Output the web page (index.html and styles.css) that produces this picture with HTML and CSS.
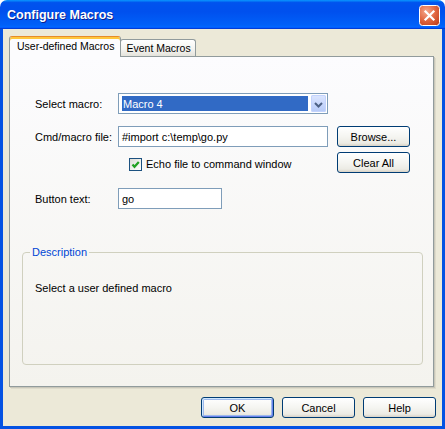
FILE: index.html
```html
<!DOCTYPE html>
<html>
<head>
<meta charset="utf-8">
<title>Configure Macros</title>
<link rel="stylesheet" href="styles.css">
</head>
<body>
<div class="window">
  <div class="titlebar">
    <span class="title">Configure Macros</span>
    <span class="close">
      <svg width="21" height="21" viewBox="0 0 21 21">
        <defs>
          <radialGradient id="cg" cx="35%" cy="30%" r="85%">
            <stop offset="0" stop-color="#F5A78C"/>
            <stop offset="0.55" stop-color="#E0653F"/>
            <stop offset="1" stop-color="#C2401D"/>
          </radialGradient>
        </defs>
        <rect x="0.5" y="0.5" width="20" height="20" rx="3" fill="url(#cg)" stroke="#fff"/>
        <path d="M6.5 6.5L14.5 14.5M14.5 6.5L6.5 14.5" stroke="#fff" stroke-width="2.2" stroke-linecap="square"/>
      </svg>
    </span>
  </div>
  <div class="frame">
    <div class="tabs">
      <div class="tab active">User-defined Macros</div>
      <div class="tab">Event Macros</div>
    </div>
    <div class="panel">
      <div class="row">
        <span class="label">Select macro:</span>
        <div class="combo">
          <span class="combo-value">Macro 4</span>
          <span class="combo-btn">
            <svg width="15" height="19" viewBox="0 0 15 19">
              <path d="M4 8L7.5 11.5L11 8" fill="none" stroke="#4D6185" stroke-width="2"/>
            </svg>
          </span>
        </div>
      </div>
      <div class="row r2">
        <span class="label">Cmd/macro file:</span>
        <div class="field">#import c:\temp\go.py</div>
        <div class="btn">Browse...</div>
      </div>
      <div class="row r3">
        <span class="label"></span>
        <div class="check-wrap">
          <span class="checkbox">
            <svg width="11" height="11" viewBox="0 0 11 11">
              <path d="M2.5 5.5L4.5 7.8L8.8 3" fill="none" stroke="#21A121" stroke-width="2.2"/>
            </svg>
          </span>
          <span class="check-label">Echo file to command window</span>
        </div>
        <div class="btn">Clear All</div>
      </div>
      <div class="row r4">
        <span class="label">Button text:</span>
        <div class="field short">go</div>
      </div>
      <fieldset class="group">
        <legend>Description</legend>
        <p class="desc">Select a user defined macro</p>
      </fieldset>
    </div>
    <div class="actions">
      <div class="btn default">OK</div>
      <div class="btn">Cancel</div>
      <div class="btn">Help</div>
    </div>
  </div>
</div>
</body>
</html>
```

FILE: styles.css
```css
html, body {
  margin: 0;
  padding: 0;
  background: #ffffff;
}
body {
  font-family: "Liberation Sans", Arial, sans-serif;
  font-size: 11px;
  color: #000;
}
.window {
  width: 445px;
  height: 429px;
  display: flex;
  flex-direction: column;
}
.titlebar {
  height: 29px;
  flex: none;
  box-sizing: border-box;
  display: flex;
  align-items: center;
  justify-content: space-between;
  padding: 0 5px 0 7px;
  border-radius: 7px 7px 0 0;
  background: linear-gradient(180deg, #0997ff 0%, #0053ee 9%, #0050ee 40%, #0060f8 86%, #0066ff 92%, #005bff 95%, #003dd7 97%, #003dd7 100%);
}
.title {
  color: #fff;
  font-weight: bold;
  font-size: 12.5px;
  text-shadow: 1px 1px 0 #0a1f8f;
  padding-top: 1px;
}
.close {
  display: flex;
  margin-top: 2px;
}
.frame {
  flex: 1;
  display: flex;
  flex-direction: column;
  background: #ECE9D8;
  border: 3px solid #0452E3;
  border-top: 0;
  padding: 7px 7px 0 6px;
}
.tabs {
  display: flex;
  align-items: flex-end;
  height: 20px;
  font-size: 10.5px;
}
.tab {
  box-sizing: border-box;
  height: 17px;
  padding: 0 4px 0 5px;
  display: flex;
  align-items: center;
  border: 1px solid #919B9C;
  border-bottom: 0;
  border-radius: 3px 3px 0 0;
  background: linear-gradient(180deg, #ffffff 0%, #F3F3EF 60%, #E4E3DB 100%);
  margin-left: -1px;
}
.tab.active {
  position: relative;
  z-index: 2;
  height: 21px;
  margin-bottom: -1px;
  margin-left: 0;
  padding: 0 6px 2px 7px;
  background: #FCFCFE;
  border-top: 1px solid #E68B2C;
  box-shadow: inset 0 2px 0 #FFC73C;
}
.panel {
  box-sizing: border-box;
  width: 425px;
  height: 331px;
  border: 1px solid #919B9C;
  background: linear-gradient(180deg, #FCFCFE 0%, #F4F3EE 100%);
  box-shadow: 1px 1px 0 #C9C7BA, 2px 2px 0 #DEDBCB;
  padding: 36px 0 0 25px;
}
.row {
  display: flex;
  align-items: center;
  height: 21px;
}
.r2 { margin-top: 12px; }
.r3 { margin-top: 5px; align-items: flex-start; }
.r4 { margin-top: 15px; }
.label {
  width: 83px;
  flex: none;
}
.combo, .field {
  box-sizing: border-box;
  width: 210px;
  height: 21px;
  border: 1px solid #7F9DB9;
  background: #fff;
  flex: none;
}
.combo {
  display: flex;
  align-items: stretch;
  padding: 2px 1px 1px 3px;
}
.combo-value {
  flex: 1;
  background: #316AC5;
  color: #fff;
  display: flex;
  align-items: center;
  padding-left: 1px;
  margin-right: 3px;
  margin-bottom: 1px;
}
.combo-btn {
  width: 15px;
  margin-top: -1px;
  display: flex;
  border-radius: 2px;
  background: linear-gradient(180deg, #DDE6FE 0%, #C5D5FC 60%, #B5C9F6 100%);
  box-shadow: inset 0 0 0 1px #C3D3FD;
}
.field {
  display: flex;
  align-items: center;
  padding-left: 3px;
}
.field.short {
  width: 104px;
}
.btn {
  box-sizing: border-box;
  width: 73px;
  height: 21px;
  flex: none;
  display: flex;
  align-items: center;
  justify-content: center;
  border: 1px solid #003C74;
  border-radius: 3px;
  background: linear-gradient(180deg, #FFFFFF 0%, #F5F5F1 50%, #ECEBE4 85%, #D8D2C6 100%);
}
.row .btn {
  margin-left: 9px;
}
.check-wrap {
  width: 210px;
  flex: none;
  display: flex;
  align-items: center;
  padding: 6px 0 0 11px;
  box-sizing: border-box;
}
.checkbox {
  box-sizing: border-box;
  width: 13px;
  height: 13px;
  border: 1px solid #1C5180;
  background: linear-gradient(135deg, #DCDCD7 0%, #F2F2EE 60%, #FFFFFF 100%);
  display: flex;
  flex: none;
}
.check-label {
  margin-left: 4px;
  line-height: 13px;
}
.group {
  box-sizing: border-box;
  width: 401px;
  height: 119px;
  margin: 37px 0 0 -13px;
  padding: 0 0 0 7px;
  border: 1px solid #D0D0BF;
  border-radius: 4px;
}
.group legend {
  color: #0046D5;
  padding: 0 2px;
  line-height: 13px;
}
.desc {
  margin: 23px 0 0 5px;
  line-height: 13px;
}
.actions {
  display: flex;
  justify-content: flex-end;
  gap: 8px;
  margin-top: 10px;
  margin-right: -1px;
}
.btn.default {
  box-shadow: inset 1px 1px 0 #CEE7FF, inset -1px -1px 0 #6982EE, inset 0 0 0 2px #9DB9EB;
}
```
